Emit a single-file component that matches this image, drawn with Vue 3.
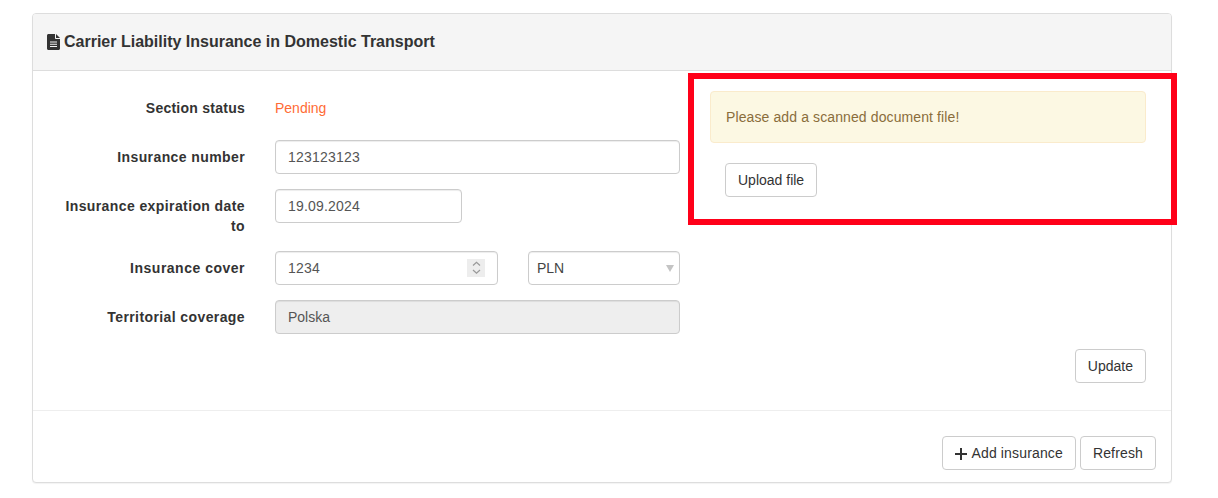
<template>
  <div class="page">
    <div class="panel">
      <div class="panel-heading">
        <svg class="doc-icon" viewBox="0 0 13 16" width="13" height="16">
          <path
            fill="#333"
            fill-rule="evenodd"
            d="M1.500 0H8v4.200c0 .5.3.8.8.8H13v9.500c0 .8-.7 1.500-1.500 1.500h-10C.7 16 0 15.300 0 14.500v-13C0 .7.7 0 1.500 0ZM9 0l4 4H9V0ZM3 7.500v1h7v-1H3Zm0 2.300v1h7v-1H3Zm0 2.300v1h7v-1H3Z"
          />
        </svg>
        <h3>Carrier Liability Insurance in Domestic Transport</h3>
      </div>

      <div class="panel-body">
        <form class="form-col" @submit.prevent>
          <div class="form-row">
            <label class="tight">Section status</label>
            <div class="static-value">Pending</div>
          </div>
          <div class="form-row">
            <label>Insurance number</label>
            <input v-model="number" class="control digits" type="text" />
          </div>
          <div class="form-row">
            <label>Insurance expiration date to</label>
            <input v-model="expires" class="control digits date" type="text" />
          </div>
          <div class="form-row">
            <label class="loose">Insurance cover</label>
            <div class="cover">
              <div class="cover-amount">
                <input v-model="cover" class="control digits" type="text" />
                <span class="spinner">
                  <svg viewBox="0 0 18 18" width="18" height="18">
                    <path d="M6 6.500 9.500 3.200 13 6.500M6 11l3.500 3.300L13 11" fill="none" stroke="#999" stroke-width="1.200" />
                  </svg>
                </span>
              </div>
              <div class="cover-currency">
                <select v-model="currency" class="control select">
                  <option>PLN</option>
                  <option>EUR</option>
                </select>
                <span class="caret"></span>
              </div>
            </div>
          </div>
          <div class="form-row">
            <label>Territorial coverage</label>
            <input class="control" type="text" value="Polska" disabled />
          </div>
        </form>

        <div class="side-col">
          <div class="alert">Please add a scanned document file!</div>
          <button class="btn upload" type="button">Upload file</button>
        </div>
      </div>

      <div class="update-row">
        <button class="btn" type="button">Update</button>
      </div>

      <div class="panel-footer">
        <button class="btn wide" type="button">
          <svg class="plus" viewBox="0 0 12 12" width="12" height="12">
            <path d="M6 0v12M0 6h12" stroke="#333" stroke-width="2" />
          </svg>
          Add insurance
        </button>
        <button class="btn wide" type="button">Refresh</button>
      </div>
    </div>

    <!-- red marker drawn over the screenshot -->
    <div class="marker"></div>
  </div>
</template>

<script setup>
import { ref } from "vue";

const number = ref("123123123");
const expires = ref("19.09.2024");
const cover = ref("1234");
const currency = ref("PLN");
</script>

<style scoped>
.page {
  position: relative;
  height: 498px;
  padding: 13px 46px 0 32px;
  box-sizing: border-box;
  background: #fff;
  font-family: "Liberation Sans", Arial, sans-serif;
  font-size: 14px;
  line-height: 20px;
  color: #333;
}

.panel {
  border: 1px solid #ddd;
  border-radius: 4px;
  box-shadow: 0 1px 1px rgba(0, 0, 0, 0.05);
  background: #fff;
}

.panel-heading {
  display: flex;
  align-items: center;
  gap: 4px;
  height: 56px;
  padding: 0 14px;
  background: #f5f5f5;
  border-bottom: 1px solid #ddd;
  border-radius: 3px 3px 0 0;
}

.panel-heading h3 {
  margin: 0;
  font-size: 16px;
  font-weight: 700;
  line-height: 18px;
}

.doc-icon {
  flex: none;
}

.panel-body {
  display: flex;
  gap: 30px;
  padding: 20px 25px 0 0;
}

.form-col {
  flex: none;
  width: 647px;
  display: flex;
  flex-direction: column;
  gap: 15px;
}

.form-row {
  display: flex;
  gap: 30px;
  align-items: flex-start;
}

.form-row label {
  flex: none;
  width: 212px;
  box-sizing: border-box;
  padding: 7px 0 0 20px;
  text-align: right;
  font-weight: 700;
  letter-spacing: 0.4px;
}

.form-row label.tight {
  letter-spacing: 0.25px;
}

.form-row label.loose {
  letter-spacing: 0.5px;
}

.static-value {
  min-height: 34px;
  box-sizing: border-box;
  padding-top: 7px;
  color: #ff6b35;
}

.control {
  display: block;
  width: 405px;
  height: 34px;
  box-sizing: border-box;
  padding: 6px 12px;
  border: 1px solid #ccc;
  border-radius: 4px;
  background: #fff;
  color: #555;
  font: inherit;
  box-shadow: inset 0 1px 1px rgba(0, 0, 0, 0.075);
}

.control:disabled {
  background: #eee;
  opacity: 1;
}

.digits {
  letter-spacing: 0.2px;
}

.date {
  width: 187px;
}

.cover {
  display: flex;
  gap: 30px;
}

.cover-amount {
  position: relative;
  width: 223px;
}

.cover-amount .control {
  width: 100%;
}

.spinner {
  position: absolute;
  top: 8px;
  right: 13px;
  width: 18px;
  height: 18px;
  background: #ededed;
}

.spinner svg {
  display: block;
}

.cover-currency {
  position: relative;
  width: 152px;
}

.select {
  width: 100%;
  padding: 6px 8px;
  appearance: none;
  color: #444;
}

.caret {
  position: absolute;
  top: 14px;
  right: 6px;
  border-style: solid;
  border-width: 7px 4px 0;
  border-color: #c4c4c4 transparent transparent;
}

.side-col {
  flex: 1;
}

.alert {
  padding: 15px;
  border: 1px solid #faebcc;
  border-radius: 4px;
  background: #fcf8e3;
  color: #8a6d3b;
  letter-spacing: 0.11px;
}

.btn {
  height: 34px;
  box-sizing: border-box;
  padding: 6px 12px;
  border: 1px solid #ccc;
  border-radius: 4px;
  background: #fff;
  color: #333;
  font: inherit;
}

.wide {
  letter-spacing: 0.15px;
}

.upload {
  margin: 20px 0 0 15px;
}

.update-row {
  display: flex;
  justify-content: flex-end;
  padding: 15px 25px 27px 0;
}

.panel-footer {
  display: flex;
  justify-content: flex-end;
  gap: 4px;
  padding: 25px 15px 12px;
  border-top: 1px solid #eee;
}

.plus {
  margin-right: 1px;
  vertical-align: -2px;
}

.marker {
  position: absolute;
  left: 688px;
  top: 73px;
  width: 489px;
  height: 152px;
  box-sizing: border-box;
  border: 6px solid #ff0019;
  pointer-events: none;
}
</style>
